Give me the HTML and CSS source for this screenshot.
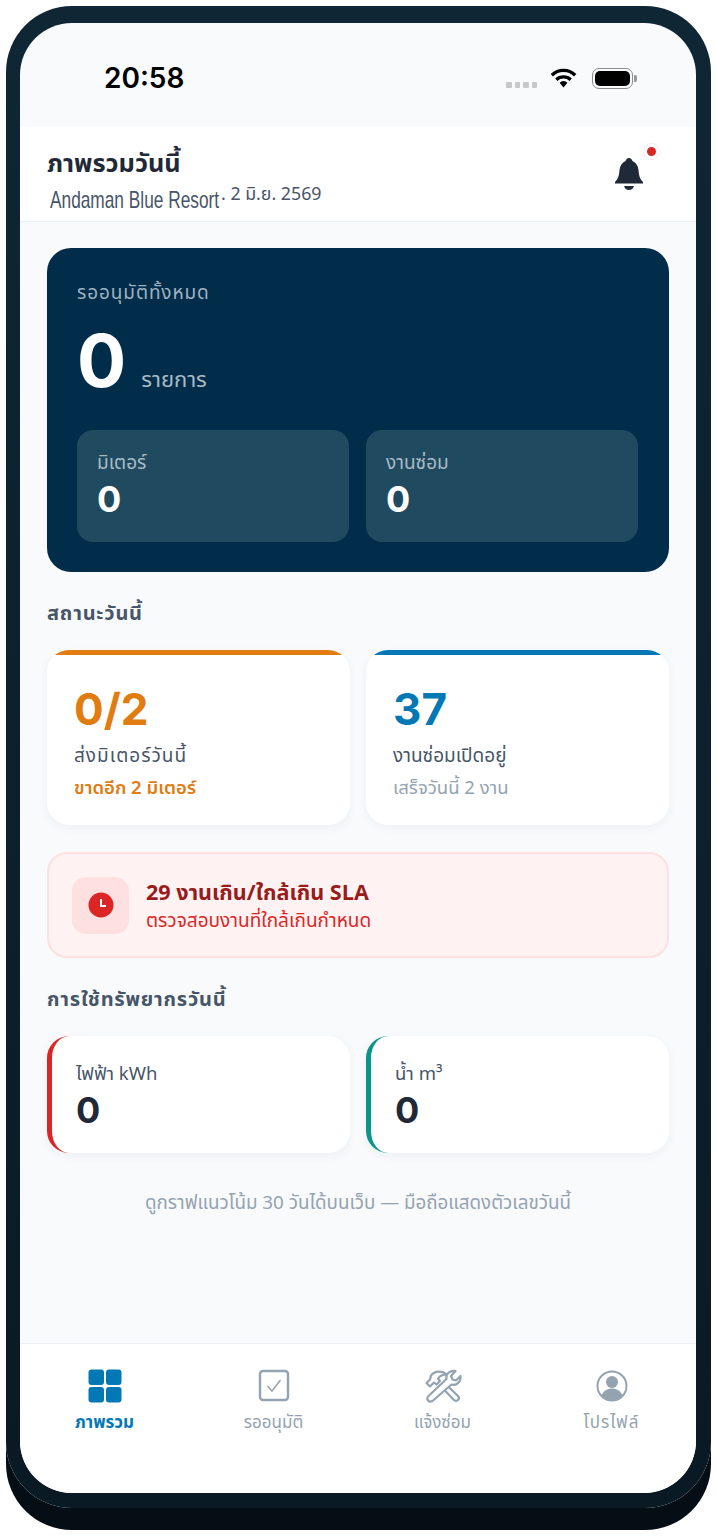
FILE: index.html
```html
<!DOCTYPE html>
<html lang="th">
<head>
  <meta charset="UTF-8" />
  <meta name="viewport" content="width=device-width, initial-scale=1.0"/>
  <title>ภาพรวมวันนี้</title>
  <link rel="stylesheet" href="styles.css">
</head>
<body>
<div class="phone">
  <div class="screen">

    <!-- Status bar -->
    <div class="status">
      <span class="clock">20:58</span>
      <div class="status-icons">
        <span class="signal"><i></i><i></i><i></i><i></i></span>
        <svg class="wifi" viewBox="0 0 24 18" width="27" height="20"><path fill="none" stroke="#000" stroke-width="3" d="M1.500 6.500a15 15 0 0 1 21 0M5.500 10.500a9.500 9.500 0 0 1 13 0"/><path d="M8.500 13.200a5 5 0 0 1 7 0L12 17.500z" fill="#000"/></svg>
        <span class="battery"><span></span></span>
        <span class="battery-cap"></span>
      </div>
    </div>

    <!-- Header -->
    <header class="top">
      <div>
        <h1>ภาพรวมวันนี้</h1>
        <div class="sub"><span class="resort">Andaman Blue Resort</span><span class="date">. 2 มิ.ย. 2569</span></div>
      </div>
      <div class="bell">
        <svg viewBox="0 0 28 32" width="28" height="32"><path fill="#1f2937" d="M14 0c2 0 3 1.500 3.500 3 3.500 1.500 5.500 5 6 9 .5 6 1.500 9 4.500 12v1.500H0V24c3-3 4-6 4.500-12 .5-4 2.500-7.500 6-9C11 1.500 12 0 14 0zM9 28h10c-1 3-3 4-5 4s-4-1-5-4z"/></svg>
        <span class="dot"></span>
      </div>
    </header>

    <main class="content">
      <!-- Pending total -->
      <section class="hero">
        <div class="hero-label">รออนุมัติทั้งหมด</div>
        <div class="hero-total"><span class="big">0</span><span class="unit">รายการ</span></div>
        <div class="hero-grid">
          <div class="hero-box"><div class="box-label">มิเตอร์</div><div class="box-num">0</div></div>
          <div class="hero-box"><div class="box-label">งานซ่อม</div><div class="box-num">0</div></div>
        </div>
      </section>

      <h2>สถานะวันนี้</h2>
      <div class="pair">
        <div class="card card-orange">
          <div class="stat c-orange">0/2</div>
          <div class="stat-label spaced">ส่งมิเตอร์วันนี้</div>
          <div class="stat-note c-orange-note">ขาดอีก 2 มิเตอร์</div>
        </div>
        <div class="card card-blue">
          <div class="stat c-blue">37</div>
          <div class="stat-label">งานซ่อมเปิดอยู่</div>
          <div class="stat-note c-muted">เสร็จวันนี้ 2 งาน</div>
        </div>
      </div>

      <!-- SLA alert -->
      <div class="alert">
        <div class="alert-icon">
          <svg viewBox="0 0 26 26" width="26" height="26"><circle cx="13" cy="13" r="12.500" fill="#dc2626"/><path d="M13 7v7h5" fill="none" stroke="#fff" stroke-width="2"/></svg>
        </div>
        <div class="alert-body">
          <div class="alert-title">29 งานเกิน/ใกล้เกิน SLA</div>
          <div class="alert-text">ตรวจสอบงานที่ใกล้เกินกำหนด</div>
        </div>
      </div>

      <h2 class="h2-res">การใช้ทรัพยากรวันนี้</h2>
      <div class="pair">
        <div class="res res-red"><div class="res-label">ไฟฟ้า kWh</div><div class="res-num">0</div></div>
        <div class="res res-teal"><div class="res-label">น้ำ m³</div><div class="res-num">0</div></div>
      </div>

      <p class="foot">ดูกราฟแนวโน้ม 30 วันได้บนเว็บ — มือถือแสดงตัวเลขวันนี้</p>
    </main>

    <!-- Bottom nav -->
    <nav class="tabs">
      <div class="tab tab-on">
        <svg viewBox="0 0 34 34" width="34" height="34"><rect x="0.500" y="0.500" width="15.500" height="15.500" rx="3" fill="#0378b5"/><rect x="18" y="0.500" width="15.500" height="15.500" rx="3" fill="#0378b5"/><rect x="0.500" y="18" width="15.500" height="15.500" rx="3" fill="#0378b5"/><rect x="18" y="18" width="15.500" height="15.500" rx="3" fill="#0378b5"/></svg>
        <span>ภาพรวม</span>
      </div>
      <div class="tab">
        <svg viewBox="0 0 34 34" width="34" height="34"><rect x="3" y="2" width="28" height="29" rx="3" fill="none" stroke="#94a3b0" stroke-width="2.400"/><path d="M10.500 17l4.500 5 8.500-11" fill="none" stroke="#94a3b0" stroke-width="1.500"/></svg>
        <span>รออนุมัติ</span>
      </div>
      <div class="tab">
        <svg viewBox="-1 -1 38 34" width="38" height="34" fill="none" stroke="#94a3b0" stroke-width="2.200" stroke-linejoin="round"><path d="M1.500 13l3.500 3.500 4-4 2.500 2 3.500-3.500-2-2.500c2-3 5-4 9-4-5-4-12-4-16 1l-1 4z"/><path d="M14.500 15L29 30a2.500 2.500 0 0 0 4-4L18 11.500"/><path fill="#fff" d="M3 26.500L21.500 9c-1-5 3.500-9 9-8L26 6l1.500 3.500 3.500 1 4.500-4.500c1 5.500-4 10-9 8.500L7.500 31c-3.500 2-6.500-1.500-4.500-4.500z"/></svg>
        <span>แจ้งซ่อม</span>
      </div>
      <div class="tab">
        <svg viewBox="0 0 34 34" width="34" height="34"><circle cx="17" cy="17" r="14.500" fill="none" stroke="#94a3b0" stroke-width="2"/><circle cx="17" cy="13" r="6" fill="#94a3b0"/><path d="M6.500 26.500c2-5 6-7 10.500-7s8.500 2 10.500 7A14 14 0 0 1 17 31a14 14 0 0 1-10.500-4.500z" fill="#94a3b0"/></svg>
        <span class="spaced">โปรไฟล์</span>
      </div>
    </nav>

  </div>
</div>
</body>
</html>
```

FILE: styles.css
```css
* { box-sizing: border-box; }
html, body { margin: 0; padding: 0; }
body {
  width: 716px;
  height: 1536px;
  background: #fff;
  overflow: hidden;
  font-family: "Noto Sans Thai", "Noto Sans", "Liberation Sans", sans-serif;
  color: #1f2937;
  padding: 6px 5px 0 6px;
}
.phone {
  width: 705px;
  height: 1502px;
  padding: 17px 15px 15px 14px;
  border-radius: 66px;
  background: linear-gradient(#0f2635, #0a1a24);
  box-shadow: 0 22px 0 #040e14;
}
.screen {
  height: 1470px;
  border-radius: 52px;
  overflow: hidden;
  background: #f8fafc;
  display: flex;
  flex-direction: column;
}
.spaced { letter-spacing: 1px; }

/* status bar */
.status {
  height: 104px;
  flex: none;
  display: flex;
  align-items: center;
  justify-content: space-between;
  padding: 6px 59px 0 84px;
}
.clock { font: 600 28px "Inter", "Liberation Sans", sans-serif; color: #000; }
.status-icons { display: flex; align-items: center; }
.signal { display: flex; gap: 3px; margin-top: 14px; margin-right: 13px; }
.signal i { width: 5.500px; height: 6px; background: #c8c8c8; border-radius: 1px; }
.wifi { margin-right: 15px; }
.battery {
  width: 41px;
  height: 21px;
  border: 1.500px solid #8c8c8c;
  border-radius: 7px;
  padding: 2px;
  display: block;
}
.battery span { display: block; height: 100%; background: #000; border-radius: 5px; }
.battery-cap { width: 3px; height: 7px; background: #999; border-radius: 0 2px 2px 0; margin-left: 1px; }

/* header */
.top {
  height: 95px;
  flex: none;
  background: #fff;
  border-bottom: 1px solid #edf1f4;
  display: flex;
  justify-content: space-between;
  align-items: flex-start;
  padding: 20px 27px 0;
}
.top h1 { margin: 0 0 4px; font-size: 25.300px; font-weight: 700; line-height: 34px; color: #1f2937; }
.sub { display: flex; align-items: flex-start; height: 30px; color: #475569; }
.resort {
  font: 24px "Liberation Sans", sans-serif;
  line-height: 30px;
  transform: scaleX(0.72);
  transform-origin: left;
  margin-left: 3px;
  width: 171px;
  white-space: nowrap;
}
.date { font-size: 17.800px; line-height: 20px; }
.bell { position: relative; width: 28px; height: 32px; margin: 11px 26px 0 0; }
.dot {
  position: absolute;
  top: -14.500px;
  left: 29px;
  width: 15px;
  height: 15px;
  border: 3px solid #fff;
  border-radius: 50%;
  background: #dc2626;
  box-shadow: 0 0 0 1px #fbecec;
}

/* content */
.content { flex: 1; padding: 26px 27px 0; }
.hero {
  height: 324px;
  border-radius: 24px;
  background: #012d4a;
  padding: 32px 30px 0;
}
.hero-label { font-size: 19px; line-height: 28px; letter-spacing: .9px; color: #9fb2c0; }
.hero-total { display: flex; align-items: flex-end; height: 94px; margin-top: 6px; }
.big { font: 700 73px/94px "Inter", "Liberation Sans", sans-serif; color: #fff; }
.unit { font-size: 22px; line-height: 30px; color: #a9bac6; margin: 0 0 12px 15px; }
.hero-grid { display: grid; grid-template-columns: 272px 272px; gap: 17px; margin-top: 22px; }
.hero-box { height: 112px; border-radius: 16px; background: #204a60; padding: 21px 20px 0; }
.box-label { font-size: 19px; line-height: 26px; color: #a9bac6; }
.box-num { font: 700 36px/44px "Inter", "Liberation Sans", sans-serif; color: #fff; }

h2 {
  margin: 27px 0 21px;
  font-size: 20px;
  line-height: 30px;
  font-weight: 700;
  letter-spacing: .8px;
  color: #475569;
}
.h2-res { margin: 27px 0 21px; }
.pair { display: grid; grid-template-columns: 303px 303px; gap: 16px; }

/* status cards */
.card {
  position: relative;
  height: 175px;
  border-radius: 22px;
  background: #fff;
  overflow: hidden;
  padding: 32px 27px 0;
  box-shadow: 0 3px 10px rgba(30, 50, 70, .05);
}
.card::before {
  content: "";
  position: absolute;
  top: 0;
  left: 0;
  right: 0;
  height: 5px;
  background: #e07c10;
}
.card-blue::before { background: #0378b5; }
.stat { font: 700 44px/54px "Inter", "Liberation Sans", sans-serif; }
.stat-label { font-size: 19px; line-height: 30px; color: #475569; margin-top: 6px; }
.stat-note { font-size: 18.500px; line-height: 28px; margin-top: 2px; }
.c-orange { color: #e07c10; }
.c-orange-note { color: #e07c10; font-weight: 600; }
.c-blue { color: #0378b5; }
.c-muted { color: #94a3b0; }

/* alert */
.alert {
  height: 106px;
  margin-top: 27px;
  border: 2px solid #fde0e0;
  border-radius: 20px;
  background: #fef2f2;
  display: flex;
  align-items: center;
  gap: 17px;
  padding: 0 23px;
}
.alert-icon {
  width: 57px;
  height: 57px;
  border-radius: 14px;
  background: #fee0e0;
  display: flex;
  align-items: center;
  justify-content: center;
}
.alert-body { padding-top: 4px; }
.alert-title { font-size: 21.600px; line-height: 29px; font-weight: 700; color: #991b1b; }
.alert-text { font-size: 19px; line-height: 27px; color: #dc2626; }

/* resource cards */
.res {
  height: 117px;
  border-radius: 22px;
  background: #fff;
  border-left: 5px solid;
  padding: 23px 24px 0;
  box-shadow: 0 3px 10px rgba(30, 50, 70, .05);
}
.res-red { border-color: #dc2626; }
.res-teal { border-color: #0d9488; }
.res-label { font-size: 18.500px; line-height: 30px; color: #475569; }
.res-num { font: 700 36px/44px "Inter", "Liberation Sans", sans-serif; color: #1f2937; margin-top: -1px; }
.foot { margin: 36px 0 0; text-align: center; font-size: 18.800px; line-height: 28px; color: #94a3b0; }

/* bottom nav */
.tabs {
  height: 150px;
  flex: none;
  background: #fff;
  border-top: 1px solid #edf1f4;
  display: grid;
  grid-template-columns: repeat(4, 1fr);
  padding-top: 25px;
  align-content: start;
}
.tab {
  display: flex;
  flex-direction: column;
  align-items: center;
  height: 66px;
  justify-content: space-between;
  font-size: 17px;
  color: #94a3b0;
  line-height: 24px;
}
.tab-on { color: #0378b5; font-weight: 700; }
```
